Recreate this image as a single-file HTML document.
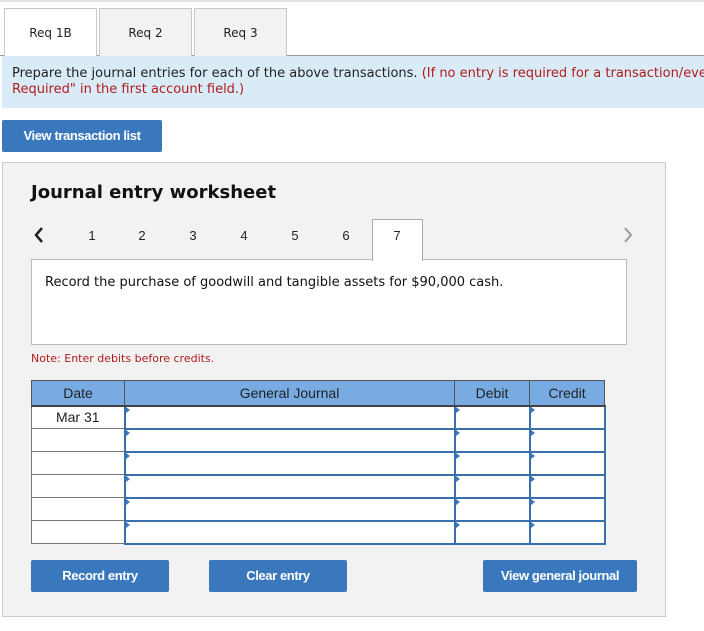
<!DOCTYPE html>
<html><head><style>
*{margin:0;padding:0;box-sizing:border-box}
html,body{width:704px;height:631px;overflow:hidden}
body{background:#fff;position:relative;font-family:"DejaVu Sans","Liberation Sans",sans-serif;color:#222}
.a{position:absolute}
.tab{position:absolute;top:8px;height:48px;border:1px solid #c8c8c8;border-bottom:none;background:#f2f2f2;font-size:12px;text-align:center;line-height:48px}
.btn{position:absolute;background:#3a78bd;color:#fff;font-family:"Liberation Sans",sans-serif;font-weight:bold;font-size:13px;text-align:center;border-radius:2px;letter-spacing:-0.4px}
.n{position:absolute;top:228px;font-family:"Liberation Sans",sans-serif;font-size:13px;width:20px;text-align:center;margin-left:-10px}
table{position:absolute;left:31px;top:380px;border-collapse:collapse;font-family:"Liberation Sans",sans-serif;font-size:14px}
th{background:#78abe2;border:1px solid #555;border-bottom:2px solid #444;height:25px;font-weight:normal;color:#222}
td{border:1px solid #777;height:23px;background:#fff;position:relative}
td.i{border:2px solid #3a6fae}
td.i::before{content:"";position:absolute;left:0;top:0;border-left:4px solid #3a78bd;border-top:3px solid transparent;border-bottom:3px solid transparent}
</style></head><body>
<div class="a" style="left:0;top:0;width:704px;height:2px;background:#e4e4e4"></div>
<div class="a" style="left:0;top:55px;width:704px;height:1px;background:#999"></div>
<div class="tab" style="left:4px;width:93px;background:#fff;height:49px">Req 1B</div>
<div class="tab" style="left:99px;width:93px">Req 2</div>
<div class="tab" style="left:194px;width:93px">Req 3</div>
<div class="a" style="left:2px;top:56px;width:702px;height:52px;background:#daebf8;overflow:hidden">
<div class="a" style="left:10px;top:10px;font-size:13px;line-height:16px;white-space:nowrap">Prepare the journal entries for each of the above transactions. <span style="color:#b01c1c">(If no entry is required for a transaction/event, select "No Journal Entry</span><br><span style="color:#b01c1c">Required" in the first account field.)</span></div></div>
<div class="btn" style="left:2px;top:120px;width:160px;height:32px;line-height:32px">View transaction list</div>
<div class="a" style="left:2px;top:162px;width:664px;height:455px;background:#f2f2f2;border:1px solid #ccc"></div>
<div class="a" style="left:31px;top:182px;font-size:18px;font-weight:bold;color:#111">Journal entry worksheet</div>
<svg class="a" style="left:33px;top:227px" width="12" height="16"><path d="M9 1L3 8l6 7" stroke="#222" stroke-width="2.5" fill="none"/></svg>
<svg class="a" style="left:622px;top:227px" width="12" height="16"><path d="M3 1l6 7-6 7" stroke="#999" stroke-width="2" fill="none"/></svg>
<div class="n" style="left:92px">1</div><div class="n" style="left:142px">2</div><div class="n" style="left:193px">3</div><div class="n" style="left:244px">4</div><div class="n" style="left:295px">5</div><div class="n" style="left:346px">6</div>
<div class="a" style="left:31px;top:259px;width:596px;height:86px;background:#fff;border:1px solid #bbb"></div>
<div class="a" style="left:372px;top:219px;width:51px;height:42px;background:#fff;border:1px solid #aaa;border-bottom:none"></div>
<div class="n" style="left:397px">7</div>
<div class="a" style="left:45px;top:275px;font-size:13px;color:#111">Record the purchase of goodwill and tangible assets for $90,000 cash.</div>
<div class="a" style="left:31px;top:352px;font-size:11px;color:#b01c1c">Note: Enter debits before credits.</div>
<table>
<tr><th style="width:93px">Date</th><th style="width:330px">General Journal</th><th style="width:75px">Debit</th><th style="width:75px">Credit</th></tr>
<tr><td style="text-align:center">Mar 31</td><td class="i"></td><td class="i"></td><td class="i"></td></tr>
<tr><td></td><td class="i"></td><td class="i"></td><td class="i"></td></tr>
<tr><td></td><td class="i"></td><td class="i"></td><td class="i"></td></tr>
<tr><td></td><td class="i"></td><td class="i"></td><td class="i"></td></tr>
<tr><td></td><td class="i"></td><td class="i"></td><td class="i"></td></tr>
<tr><td></td><td class="i"></td><td class="i"></td><td class="i"></td></tr>
</table>
<div class="btn" style="left:31px;top:560px;width:138px;height:32px;line-height:32px">Record entry</div>
<div class="btn" style="left:209px;top:560px;width:138px;height:32px;line-height:32px">Clear entry</div>
<div class="btn" style="left:483px;top:560px;width:154px;height:32px;line-height:32px">View general journal</div>
</body></html>
